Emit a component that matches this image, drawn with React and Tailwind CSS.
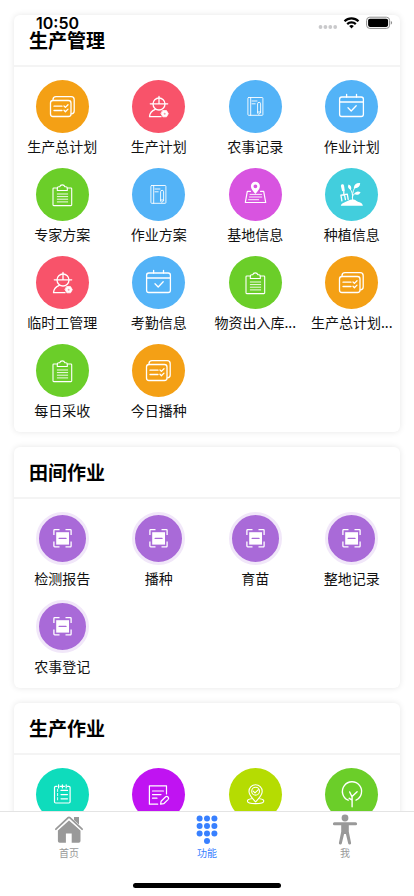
import React from 'react';

/* ── Feature icons, drawn on the 53px disc ─────────── */
const GLYPHS = {
  plans: (
    <g strokeWidth="1.3">
      <rect x="14.5" y="20.5" width="20.5" height="16" rx="2.5" />
      <path d="M17 20.3v-.6a3 3 0 0 1 3-3h15.2a3 3 0 0 1 3 3V31a2.8 2.8 0 0 1-2.8 2.8" />
      <path d="M18 26.2h8M18 30.5h8M28 26l1.4 1.4 2.6-2.6M28 30.3l1.4 1.4 2.6-2.6" />
    </g>
  ),
  worker: (
    <g strokeWidth="1.3">
      <circle cx="27" cy="24" r="6" />
      <path d="M18.3 23.8h17.4M27 16.5v7" />
      <path d="M23.3 29.3c-3.5 1.3-5.6 4-5.8 7.4H29" />
      <path d="M30.9 30.6h3.6l1.8 3.1-1.8 3.1h-3.6l-1.8-3.1z" fill="#fff" strokeWidth=".8" />
      <circle cx="32.7" cy="33.7" r="1" fill="#f8a0ac" stroke="none" />
    </g>
  ),
  book: (
    <g strokeWidth=".9">
      <rect x="18.9" y="17.5" width="15" height="17.8" rx=".8" />
      <path d="M21.7 17.5v17.8M23 21h5M23 23.8h3.2" />
      <path d="M28.6 33v-9.2a1.5 1.5 0 0 1 3 0V33l-1.5 1zM28.6 32h3" />
    </g>
  ),
  calendar: (
    <g strokeWidth="1.3">
      <rect x="14.6" y="17" width="23.8" height="19.5" rx="2.2" />
      <path d="M14.6 22h23.8M21.6 14.3V17M31.5 14.3V17M23 27.8l3.2 3.2 5-5.2" />
    </g>
  ),
  clipboard: (
    <g strokeWidth="1.1">
      <path d="M21.5 20h-3.7a.8.8 0 0 0-.8.8v16a.8.8 0 0 0 .8.8h17.1a.8.8 0 0 0 .8-.8v-16a.8.8 0 0 0-.8-.8h-3.7" />
      <path d="M21.3 22.5v-2.2a1.5 1.5 0 0 1 1.5-1.5h.9a2.7 2.7 0 0 1 5.2 0h.9a1.5 1.5 0 0 1 1.5 1.5v2.2z" />
      <path d="M21.3 26h10.4M21.3 28.6h10.4M21.3 31.2h10.4M21.3 33.9h10.4" strokeWidth=".9" />
    </g>
  ),
  map: (
    <g strokeWidth="1.2">
      <path d="M21.5 23.3h-3.2l-2 11.2h20.4l-2-11.2h-3.2" />
      <path d="M21 26.4h11.5M20.5 29h12.3M19.6 31.7h10" strokeWidth=".9" />
      <path
        d="M26.4 13.8a4.5 4.5 0 0 1 4.5 4.5c0 2.8-2.2 4.7-4.5 7.7-2.3-3-4.5-4.9-4.5-7.7a4.5 4.5 0 0 1 4.5-4.5zm0 2.6a1.9 1.9 0 1 0 0 3.8 1.9 1.9 0 0 0 0-3.8z"
        fill="#fff"
        fillRule="evenodd"
        stroke="none"
      />
    </g>
  ),
  plant: (
    <g>
      <g fill="#fff" stroke="none">
        <path d="M15.9 18c-.2-1.9 2.7-2.3 3.1-.5l.8 5.3-2.6.5z" />
        <path d="M15.8 37.7c.2-2 2.3-2.8 4.5-3.7 2.2-1 4-2.6 7.2-2.6 3.3 0 3.8 1.8 6.2 2.5 2.2.7 4 1.7 4.2 3.8z" />
        <path d="M25.9 21.8c-2.6-.8-3.6-3-2.4-5.4 2.4.7 3.4 3 2.4 5.4z" />
        <path d="M28.8 20c.3-3.4 3-5.4 6.4-4.8-.1 3.5-2.8 5.6-6.4 4.8z" />
        <path d="M29.3 26c1.1-2.5 3.7-3.3 6.3-1.8-1.2 2.6-3.9 3.4-6.3 1.8z" />
      </g>
      <path d="M18.8 23v3M16.9 32.8l-1-5.7 6.4-.9.9 5.2M19.5 26.6l.9 5" strokeWidth="1.3" />
      <path d="M27.6 32c-.4-4-.2-8.5 2.2-12.6M27.4 29.5c.2-2 1-3.3 3-4.2M27.4 27c-.1-2.2-.8-4-2.2-6" strokeWidth=".9" />
    </g>
  ),
  scan: (
    <g>
      <path
        d="M17.9 23v-4.6a.8.8 0 0 1 .8-.8h4.8M29.5 17.6h4.8a.8.8 0 0 1 .8.8V23M35.1 29.5v4.6a.8.8 0 0 1-.8.8h-4.8M23.5 34.9h-4.8a.8.8 0 0 1-.8-.8v-4.6"
        strokeWidth="1.3"
        strokeLinecap="butt"
      />
      <rect x="20.2" y="20.2" width="12.8" height="12.4" fill="#fff" stroke="none" />
      <path d="M23.2 26.4h6.8" stroke="#a96ad8" strokeWidth="1.4" />
    </g>
  ),
  list: (
    <g strokeWidth="1.2">
      <path d="M21 18.4h-1.3a1.2 1.2 0 0 0-1.2 1.2v14.2a1.2 1.2 0 0 0 1.2 1.2h13.2a1.2 1.2 0 0 0 1.2-1.2V19.6a1.2 1.2 0 0 0-1.2-1.2h-1.3M24.2 18.4h4.2" />
      <path d="M22.6 16.8v3.2M26.4 16.8v3.2M30.2 16.8v3.2M25 22.4h6.5M25 26.6h6.5M25 30.8h6.5" />
      <path d="M21.6 21.2v2.3M21.6 25.4v2.3M21.6 29.6v2.3" strokeWidth=".9" />
    </g>
  ),
  edit: (
    <g strokeWidth="1.2">
      <path d="M34.5 26v-8.2H17.4v18.4h8.3" />
      <path d="M20.5 23h11M20.5 26.6h8.5M20.5 30.2h4.5" />
      <path d="M28.6 36.2l.5-3 4.3-4.2a1.8 1.8 0 0 1 2.6 2.6l-4.3 4.1z" />
    </g>
  ),
  location: (
    <g strokeWidth="1.1">
      <path d="M26.6 33.8c-3-3.5-6.6-6.4-6.6-10.4a6.6 6.6 0 0 1 13.2 0c0 4-3.6 6.9-6.6 10.4z" />
      <circle cx="26.6" cy="23.2" r="3.9" />
      <path d="M24.2 23.2l1.8 1.7 3.4-3.2" />
      <path d="M22.4 30.7c-2.4.4-4 1.2-4 2.2 0 1.5 3.6 2.7 8.2 2.7s8.2-1.2 8.2-2.7c0-1-1.6-1.8-4-2.2" />
    </g>
  ),
  tree: (
    <g strokeWidth="1.4">
      <path d="M23.2 32.2a9.6 9.6 0 1 1 7.8-.1" />
      <path d="M27.1 38.8V29l-2.4-5M27.1 28.6l5-4.8M24.2 30.3l2.6 1.5" />
    </g>
  ),
};

const SECTIONS = [
  {
    title: '生产管理',
    items: [
      { name: '生产总计划', icon: 'plans', color: 'bg-[#f4a015]' },
      { name: '生产计划', icon: 'worker', color: 'bg-[#f8536a]' },
      { name: '农事记录', icon: 'book', color: 'bg-[#53b3f7]' },
      { name: '作业计划', icon: 'calendar', color: 'bg-[#53b3f7]' },
      { name: '专家方案', icon: 'clipboard', color: 'bg-[#6bce29]' },
      { name: '作业方案', icon: 'book', color: 'bg-[#53b3f7]' },
      { name: '基地信息', icon: 'map', color: 'bg-[#d854e0]' },
      { name: '种植信息', icon: 'plant', color: 'bg-[#42cedd]' },
      { name: '临时工管理', icon: 'worker', color: 'bg-[#f8536a]' },
      { name: '考勤信息', icon: 'calendar', color: 'bg-[#53b3f7]' },
      { name: '物资出入库...', icon: 'clipboard', color: 'bg-[#6bce29]' },
      { name: '生产总计划...', icon: 'plans', color: 'bg-[#f4a015]' },
      { name: '每日采收', icon: 'clipboard', color: 'bg-[#6bce29]' },
      { name: '今日播种', icon: 'plans', color: 'bg-[#f4a015]' },
    ],
  },
  {
    title: '田间作业',
    items: [
      { name: '检测报告', icon: 'scan', color: 'bg-[#a96ad8] border-3 border-[#f1e7f9]' },
      { name: '播种', icon: 'scan', color: 'bg-[#a96ad8] border-3 border-[#f1e7f9]' },
      { name: '育苗', icon: 'scan', color: 'bg-[#a96ad8] border-3 border-[#f1e7f9]' },
      { name: '整地记录', icon: 'scan', color: 'bg-[#a96ad8] border-3 border-[#f1e7f9]' },
      { name: '农事登记', icon: 'scan', color: 'bg-[#a96ad8] border-3 border-[#f1e7f9]' },
    ],
  },
  {
    title: '生产作业',
    items: [
      { icon: 'list', color: 'bg-[#0edcbc]' },
      { icon: 'edit', color: 'bg-[#c013f2]' },
      { icon: 'location', color: 'bg-[#b5dc02]' },
      { icon: 'tree', color: 'bg-[#6bce29]' },
    ],
  },
];

/* ── Tab bar ───────────────────────────────────────── */
const TABS = [
  {
    name: '首页',
    icon: (
      <>
        <path d="M16 6.6L4.9 16.4V27a1.8 1.8 0 0 0 1.8 1.8h6.2v-9.4h5.8v9.4h7a1.8 1.8 0 0 0 1.8-1.8V16.4z" />
        <path d="M21 2.9h5v8.8l-5-4.5z" />
        <path d="M2.9 15.2L15.2 3.7a1.2 1.2 0 0 1 1.6 0l12.3 11.5" fill="none" stroke="#fff" strokeWidth="3.4" />
        <path d="M2.9 15.2L15.2 3.7a1.2 1.2 0 0 1 1.6 0l12.3 11.5" fill="none" stroke="currentColor" strokeWidth="1.8" strokeLinecap="round" />
        <path d="M21 2.9h5v7.6l-5-4.5z" />
      </>
    ),
  },
  {
    name: '功能',
    active: true,
    icon: (
      <>
        {[4.4, 11.9, 19.4].map((y) =>
          [8.6, 16, 23.4].map((x) => <circle key={`${x}-${y}`} cx={x} cy={y} r="3" />)
        )}
        <circle cx="16" cy="26.9" r="3" />
      </>
    ),
  },
  {
    name: '我',
    icon: (
      <>
        <circle cx="16" cy="4" r="3.4" />
        <path d="M5.4 8.2h21.2a1.5 1.5 0 0 1 0 3h-6.8v6.6l2.3 11.1a1.5 1.5 0 0 1-2.9.7L16.9 20h-1.8l-2.3 9.6a1.5 1.5 0 0 1-2.9-.7l2.3-11.1v-6.6H5.4a1.5 1.5 0 0 1 0-3z" />
      </>
    ),
  },
];

function StatusBar() {
  return (
    <div className="absolute inset-x-0 top-0 z-10 flex items-center justify-between pt-[11px] pr-[21px] pl-9">
      <span className="font-['Inter',sans-serif] text-base leading-6 font-semibold text-black">10:50</span>
      <svg width="76" height="16" viewBox="0 0 76 16" className="shrink-0">
        <g fill="#c9c9cb">
          <circle cx="3.5" cy="12" r="1.9" />
          <circle cx="8.4" cy="12" r="1.9" />
          <circle cx="13.3" cy="12" r="1.9" />
          <circle cx="18.2" cy="12" r="1.9" />
        </g>
        <g fill="none" stroke="#000" strokeWidth="2.2">
          <path d="M27.5 6.2a10 10 0 0 1 14 0" />
          <path d="M30.2 9.1a6.1 6.1 0 0 1 8.6 0" />
        </g>
        <path d="M32.2 11a3.4 3.4 0 0 1 4.6 0l-2.3 2.6z" />
        <rect x="49.6" y="2.2" width="23" height="11.2" rx="3.2" fill="none" stroke="#8d8d8d" />
        <rect x="51.1" y="3.7" width="20" height="8.2" rx="1.8" />
        <path d="M73.8 6v3.6c.9-.3 1.3-1 1.3-1.8s-.4-1.5-1.3-1.8z" fill="#8d8d8d" />
      </svg>
    </div>
  );
}

function FeatureItem({ item }) {
  return (
    <button type="button" className="flex h-22 min-w-0 flex-col items-center">
      <span className={`flex size-[53px] shrink-0 items-center justify-center rounded-full ${item.color}`}>
        <svg
          viewBox="0 0 53 53"
          fill="none"
          stroke="#fff"
          strokeLinecap="round"
          strokeLinejoin="round"
          className="size-[53px] shrink-0"
        >
          {GLYPHS[item.icon]}
        </svg>
      </span>
      {item.name && (
        <span className="mt-[3px] text-sm leading-5 whitespace-nowrap text-[#111]">{item.name}</span>
      )}
    </button>
  );
}

function Section({ section }) {
  return (
    <section className="shrink-0 rounded-md bg-white shadow-[0_0_6px_rgba(0,0,0,0.1)]">
      <h2 className="border-b-2 border-[#f4f4f4] px-[15px] py-3 text-[19px] leading-[26px] font-bold text-black">
        {section.title}
      </h2>
      <div className="grid grid-cols-4 pt-[13px]">
        {section.items.map((item, i) => (
          <FeatureItem key={i} item={item} />
        ))}
      </div>
    </section>
  );
}

export default function App() {
  return (
    <div className="relative flex h-screen flex-col bg-white font-['Noto_Sans_CJK_SC',sans-serif]">
      <StatusBar />

      <main className="flex min-h-0 flex-1 flex-col gap-[15px] overflow-hidden px-[14px] pt-[15px]">
        {SECTIONS.map((section) => (
          <Section key={section.title} section={section} />
        ))}
      </main>

      <nav className="shrink-0 border-t border-[#e4e4e4] bg-white">
        <div className="grid grid-cols-3">
          {TABS.map((tab) => (
            <a
              key={tab.name}
              href="#"
              className={`flex flex-col items-center pt-[2px] ${tab.active ? 'text-[#3880ff]' : 'text-[#999]'}`}
            >
              <svg viewBox="0 0 32 32" fill="currentColor" className="size-8">
                {tab.icon}
              </svg>
              <span className="text-[10px] leading-[14px]">{tab.name}</span>
            </a>
          ))}
        </div>
        <div className="mx-auto mt-[23px] mb-2 h-[5px] w-[148px] rounded-full bg-black" />
      </nav>
    </div>
  );
}
